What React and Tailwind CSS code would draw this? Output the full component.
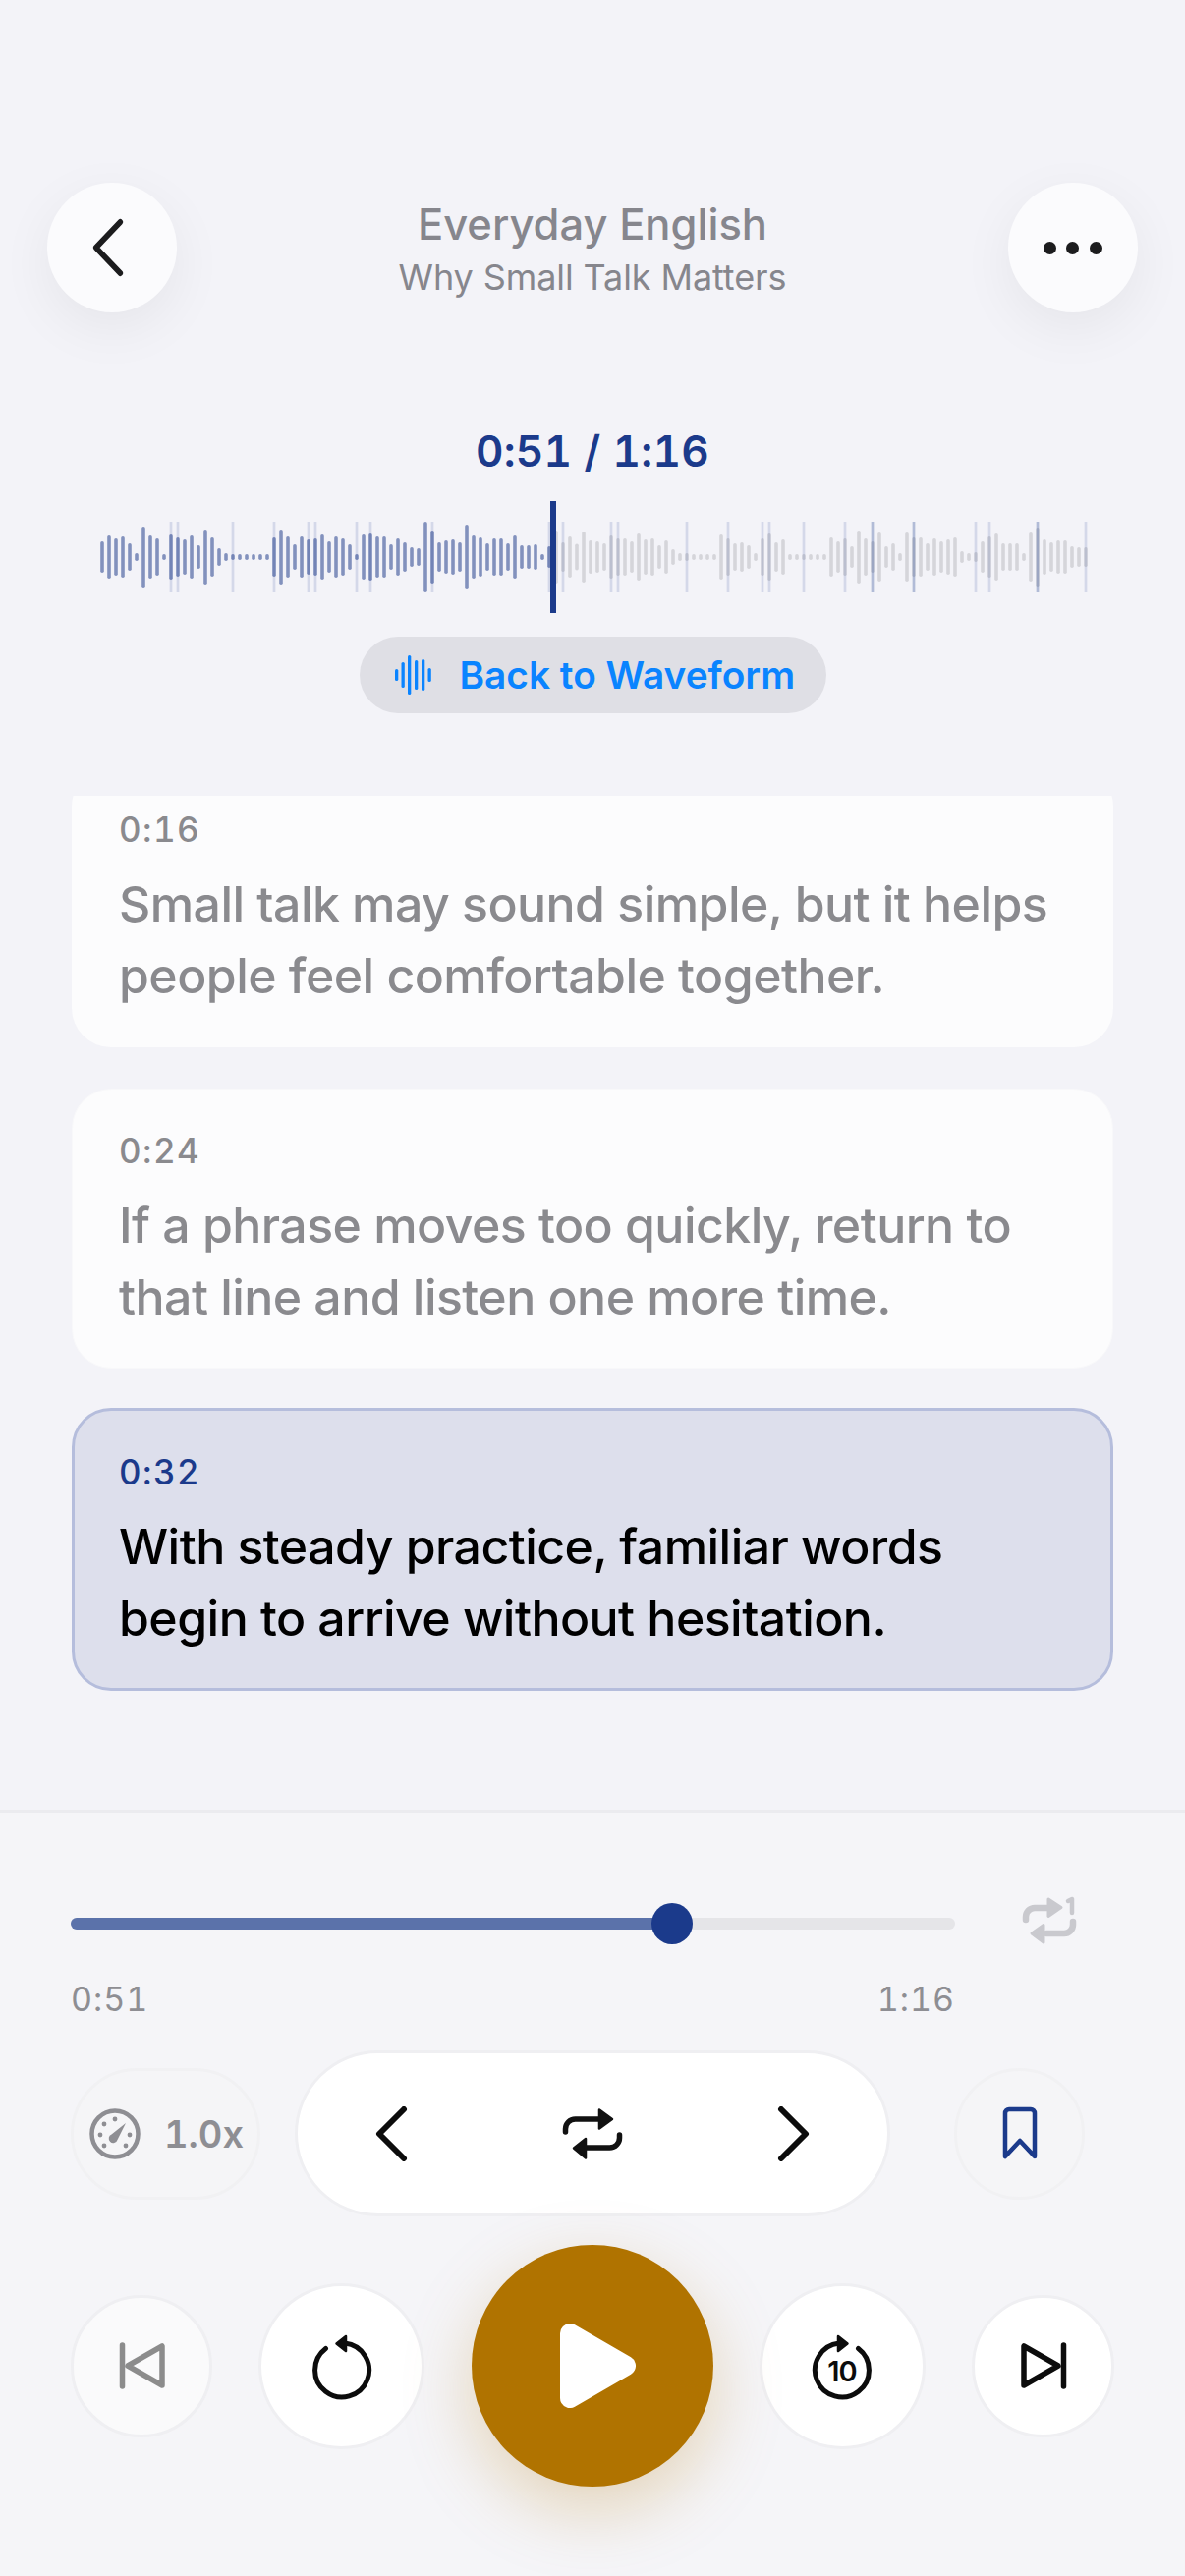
import React from "react";

const H = [32,44,38,42,28,8,62,44,38,6,46,40,36,44,24,56,40,18,8,6,6,6,6,6,6,40,56,42,26,42,36,38,46,32,42,38,26,6,46,48,42,42,26,38,30,20,18,72,54,30,34,36,30,66,44,40,28,38,38,28,44,24,24,26,6,22,54,30,42,27,52,34,32,28,44,38,38,32,48,36,38,24,34,16,8,8,6,6,6,6,46,38,28,30,24,8,38,48,30,36,6,6,6,6,6,6,40,32,38,22,54,38,32,50,22,28,8,50,40,40,28,38,32,36,40,12,8,10,32,42,48,28,28,28,8,50,60,36,30,34,34,22,20,20];
const TICKS = [10,11,19,25,30,31,37,39,48,65,67,74,75,85,91,96,97,102,108,112,118,127,129,136,143];
const DARK = [112,118,136];

function Waveform() {
  return (
    <svg width="1206" height="114" viewBox="0 0 1206 114" className="block mt-[26px]">
      {H.map((h, i) => (
        <rect key={i} x={104 + 7 * i - 1.8} y={57 - h / 2} width="3.6" height={h} rx="1.8" fill={i <= 65 ? "#8291bd" : "#d5d5da"} />
      ))}
      {TICKS.map((t) => (
        <rect key={t} x={104 + 7 * t - 1.35} y="21" width="2.7" height="72" fill="#1b3a8b" fillOpacity={DARK.includes(t) ? 0.3 : 0.14} />
      ))}
      <rect x="560" y="0" width="6" height="114" fill="#1b3a8b" />
    </svg>
  );
}

function Card({ time, lines, active, first }) {
  const shell = active
    ? "rounded-[40px] border-[3px] border-[#b5bddc] bg-[#dddfec] px-[45px] pt-[40px] pb-[34px]"
    : first
      ? "mb-[2px] rounded-[40px] bg-[#fcfcfd] px-[48px] pt-[41px] pb-[36px]"
      : "rounded-[40px] border border-[#f8f8fa] bg-[#fcfcfd] px-[47px] pt-[40px] pb-[35px]";
  return (
    <div className={shell}>
      <div className={active ? "text-[35px] leading-[44px] font-medium tabular-nums tracking-[1.4px] text-[#1b3a8b]" : "text-[35px] leading-[44px] font-medium tabular-nums tracking-[1.4px] text-[#8a8a8e]"}>{time}</div>
      <div className={active ? "mt-[18px] text-[50px] leading-[73px] font-[450] tracking-[-0.55px] text-black" : "mt-[18px] text-[50px] leading-[73px] font-[450] tracking-[-0.55px] text-[#8a8a8e]"}>
        {lines.map((l) => (
          <div key={l} className="whitespace-nowrap">{l}</div>
        ))}
      </div>
    </div>
  );
}

function RepeatIcon() {
  return (
    <svg width="66" height="56" viewBox="570 2145 66 56" fill="none">
      <path d="M575.5 2171v-3a10 10 0 0 1 10-10H612" stroke="#111" strokeWidth="5.5" strokeLinecap="round" />
      <path d="M610 2148.500l13 9.500-13 9.500z" fill="#111" stroke="#111" strokeWidth="2.5" strokeLinejoin="round" />
      <path d="M630.5 2174v3a10 10 0 0 1-10 10H594" stroke="#111" strokeWidth="5.5" strokeLinecap="round" />
      <path d="M596 2178l-12 9.500 12 10z" fill="#111" stroke="#111" strokeWidth="2.5" strokeLinejoin="round" />
    </svg>
  );
}

function RepeatOneIcon() {
  return (
    <svg width="62" height="52" viewBox="1037 1931 62 52" fill="none" className="ml-[65px] -mt-[6px]">
      <path d="M1044 1956v-3a9 9 0 0 1 9-9h16" stroke="#c9c9ce" strokeWidth="6.500" strokeLinecap="round" />
      <path d="M1067 1935l13 8.500-13 9z" fill="#c9c9ce" stroke="#c9c9ce" strokeWidth="3" strokeLinejoin="round" />
      <path d="M1092 1958v3a9 9 0 0 1-9 9h-18" stroke="#c9c9ce" strokeWidth="6.500" strokeLinecap="round" />
      <path d="M1062 1961.500l-12 8.500 12 9z" fill="#c9c9ce" stroke="#c9c9ce" strokeWidth="3" strokeLinejoin="round" />
      <path d="M1087 1937l4-2v14" stroke="#c9c9ce" strokeWidth="4.500" strokeLinecap="round" strokeLinejoin="round" />
    </svg>
  );
}

function Gauge() {
  return (
    <svg width="52" height="52" viewBox="0 0 52 52" fill="none">
      <circle cx="26" cy="26" r="23.500" stroke="#8e8e93" strokeWidth="4.500" />
      {[[26,11],[15,16],[11,27],[15,38],[37,38],[41,27]].map(([x, y]) => (
        <circle key={x + "-" + y} cx={x} cy={y} r="2.400" fill="#8e8e93" />
      ))}
      <path d="M37 15L22.500 26.500a4.500 4.500 0 1 0 6 5.500z" fill="#8e8e93" />
    </svg>
  );
}

function Rewind({ children, flip }) {
  return (
    <svg width="66" height="72" viewBox="0 0 66 72" fill="none">
      <g transform={flip ? "translate(66 0) scale(-1 1)" : undefined}>
        <path d="M36 13.100A27.500 27.500 0 1 1 16.500 18.500" stroke="#0c0c0c" strokeWidth="5" strokeLinecap="round" />
        <path d="M37 6L27.500 13.500 37 21z" fill="#0c0c0c" stroke="#0c0c0c" strokeWidth="2.500" strokeLinejoin="round" />
      </g>
      {children}
    </svg>
  );
}

export default function App() {
  return (
    <div className="relative flex h-[2622px] w-[1206px] flex-col overflow-hidden bg-[#f3f3f8] font-['Inter',sans-serif]">
      <header className="flex items-center justify-between px-[48px] pt-[186px]">
        <button className="flex h-[132px] w-[132px] items-center justify-center rounded-full bg-[#fbfbfd] shadow-[0_16px_56px_rgba(0,0,0,0.06)]">
          <svg width="42" height="62" viewBox="0 0 42 62" fill="none" className="-ml-[11px]">
            <path d="M36 5L8.500 31 36 57" stroke="#1c1c1e" strokeWidth="6" strokeLinecap="round" strokeLinejoin="round" transform="translate(2 0) scale(0.9 1)" />
          </svg>
        </button>
        <div className="flex flex-col items-center pt-[2px] text-[#86868d]">
          <div className="text-[43.500px] leading-[52px] font-medium">Everyday English</div>
          <div className="mt-[5px] text-[36px] leading-[46px] tracking-[-0.1px]">Why Small Talk Matters</div>
        </div>
        <button className="flex h-[132px] w-[132px] items-center justify-center gap-[10.500px] rounded-full bg-[#fbfbfd] shadow-[0_16px_56px_rgba(0,0,0,0.06)]">
          <span className="h-[13px] w-[13px] rounded-full bg-[#1c1c1e]" />
          <span className="h-[13px] w-[13px] rounded-full bg-[#1c1c1e]" />
          <span className="h-[13px] w-[13px] rounded-full bg-[#1c1c1e]" />
        </button>
      </header>

      <div className="mt-[116px] text-center text-[44px] leading-[50px] font-semibold tabular-nums tracking-[0.3px] text-[#1b3a8b]">0:51 / 1:16</div>
      <Waveform />
      <div className="mt-[24px] flex justify-center">
        <div className="flex h-[78px] w-[475px] items-center rounded-full bg-[#dfdfe5] pl-[36px]">
          <svg width="38" height="44" viewBox="0 0 38 44" fill="#0a84ff">
            <rect x="0" y="16" width="3.300" height="12" rx="1.600" />
            <rect x="6.500" y="9" width="3.300" height="26" rx="1.600" />
            <rect x="13" y="2" width="3.300" height="40" rx="1.600" />
            <rect x="20" y="7" width="3.300" height="30" rx="1.600" />
            <rect x="27" y="6" width="3.300" height="32" rx="1.600" />
            <rect x="33.500" y="15" width="3.300" height="14" rx="1.600" />
          </svg>
          <span className="ml-[28px] text-[38.800px] font-semibold leading-[46px] text-[#0a84ff]">Back to Waveform</span>
        </div>
      </div>

      <div className="mt-[84px] min-h-0 flex-1 overflow-hidden px-[73px]">
        <div className="-mt-[29px] flex flex-col gap-[40px]">
          <Card first time="0:16" lines={["Small talk may sound simple, but it helps", "people feel comfortable together."]} />
          <Card time="0:24" lines={["If a phrase moves too quickly, return to", "that line and listen one more time."]} />
          <Card active time="0:32" lines={["With steady practice, familiar words", "begin to arrive without hesitation."]} />
        </div>
      </div>

      <footer className="h-[780px] shrink-0 border-t-[3px] border-[#ebebef] bg-[#f5f5f8]">
        <div className="flex items-center pl-[72px] pt-[90px]">
          <div className="relative h-[12px] w-[900px] rounded-full bg-[#e5e5e8]">
            <div className="h-full w-[612px] rounded-full bg-[#5b72aa]" />
            <div className="absolute -top-[15px] left-[591px] h-[42px] w-[42px] rounded-full bg-[#1b3a8b]" />
          </div>
          <RepeatOneIcon />
        </div>
        <div className="mt-[33px] flex w-[972px] justify-between pl-[72px] text-[34px] leading-[42px] tabular-nums tracking-[1px] text-[#8e8e93]">
          <span>0:51</span>
          <span>1:16</span>
        </div>

        <div className="mt-[31px] flex items-center gap-[35px] pl-[72px]">
          <div className="flex h-[134px] w-[193px] items-center rounded-full border-[3px] border-[#f1f1f3] bg-[#f5f5f7] pl-[16px]">
            <Gauge />
            <span className="ml-[24px] text-[38px] font-semibold tabular-nums leading-[46px] text-[#8e8e93]">1.0x</span>
          </div>
          <div className="flex h-[169px] w-[606px] items-center justify-between rounded-full border-[3px] border-[#efeff2] bg-white px-[78px]">
            <svg width="34" height="56" viewBox="0 0 34 56" fill="none">
              <path d="M30 3L5 28l25 25" stroke="#0c0c0c" strokeWidth="6" strokeLinecap="round" strokeLinejoin="round" />
            </svg>
            <RepeatIcon />
            <svg width="34" height="56" viewBox="0 0 34 56" fill="none">
              <path d="M4 3l25 25L4 53" stroke="#0c0c0c" strokeWidth="6" strokeLinecap="round" strokeLinejoin="round" />
            </svg>
          </div>
          <div className="ml-[30px] flex h-[134px] w-[133px] items-center justify-center rounded-full border-[3px] border-[#f1f1f3] bg-[#f5f5f7]">
            <svg width="36" height="56" viewBox="0 0 36 56" fill="none">
              <path d="M3 51V7a4 4 0 0 1 4-4h22a4 4 0 0 1 4 4v44L18 35z" stroke="#1b3a8b" strokeWidth="4.500" strokeLinejoin="round" />
            </svg>
          </div>
        </div>

        <div className="mt-[29px] flex items-center justify-between px-[72px]">
          <div className="flex h-[145px] w-[144px] items-center justify-center rounded-full border-[3px] border-[#efeff2] bg-[#fafafb]">
            <svg width="48" height="48" viewBox="0 0 48 48" fill="none" className="ml-[2px]">
              <path d="M3.500 3v42" stroke="#8c8c8c" strokeWidth="5.500" strokeLinecap="round" />
              <path d="M44 4v40L9 24z" stroke="#8c8c8c" strokeWidth="5.500" strokeLinejoin="round" />
            </svg>
          </div>
          <div className="flex h-[169px] w-[169px] items-center justify-center rounded-full border-[3px] border-[#efeff2] bg-white">
            <Rewind />
          </div>
          <button className="relative z-10 flex h-[246px] w-[246px] items-center justify-center rounded-full bg-[#b07300] shadow-[0_24px_70px_rgba(176,115,0,0.26)]">
            <svg width="77" height="86" viewBox="0 0 77 86" fill="white" className="ml-[11px]">
              <path d="M10 10L67 43 10 76z" stroke="white" strokeWidth="20" strokeLinejoin="round" />
            </svg>
          </button>
          <div className="flex h-[169px] w-[169px] items-center justify-center rounded-full border-[3px] border-[#efeff2] bg-white">
            <Rewind flip>
              <text x="33" y="51.500" textAnchor="middle" fontFamily="Inter, sans-serif" fontWeight="600" fontSize="29" letterSpacing="-1" fill="#0c0c0c">10</text>
            </Rewind>
          </div>
          <div className="flex h-[145px] w-[145px] items-center justify-center rounded-full border-[3px] border-[#efeff2] bg-white">
            <svg width="48" height="48" viewBox="0 0 48 48" fill="none">
              <path d="M4 4v40l35-20z" stroke="#0c0c0c" strokeWidth="5.500" strokeLinejoin="round" />
              <path d="M44.500 3v42" stroke="#0c0c0c" strokeWidth="5.500" strokeLinecap="round" />
            </svg>
          </div>
        </div>
      </footer>
    </div>
  );
}
